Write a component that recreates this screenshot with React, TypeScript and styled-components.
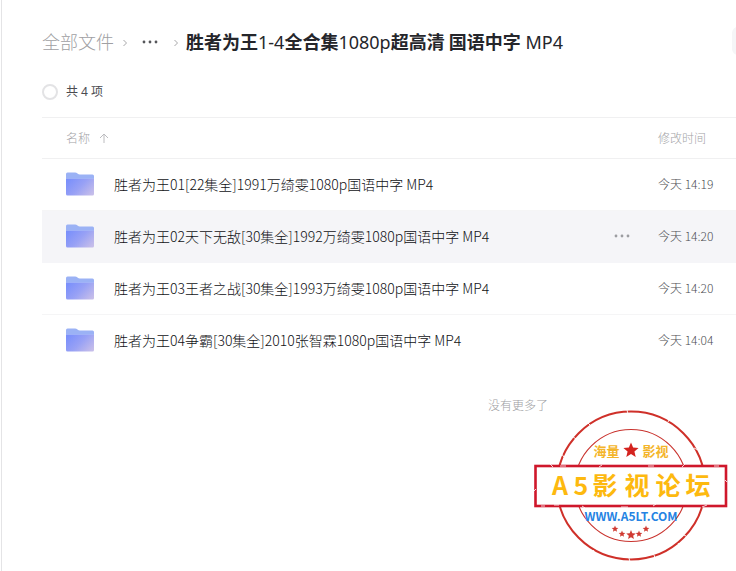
import React from "react";
import styled, { createGlobalStyle } from "styled-components";

const GlobalStyle = createGlobalStyle`
  *, *::before, *::after { box-sizing: border-box; }
  body {
    margin: 0;
    background: #fff;
    color: #25262b;
    font: 14px/20px "Noto Sans CJK SC", sans-serif;
  }
  button { font: inherit; padding: 0; border: 0; background: none; cursor: pointer; }
`;

const Page = styled.main`
  position: relative;
  min-height: 100vh;
  margin-left: 1px;
  padding: 27px 0 0 40px;
  border-left: 1px solid #e4e4e6;
  overflow: hidden;
`;

const TopBar = styled.header`
  display: flex;
  align-items: center;
  justify-content: space-between;
  height: 28px;
`;

const MoreButton = styled.button<{ $tone: string }>`
  display: flex;
  align-items: center;
  justify-content: center;
  width: 30px;
  height: 20px;
  color: ${(p) => p.$tone};
  svg { width: 16px; height: 4px; fill: currentColor; }
`;

const Crumbs = styled.nav`
  display: flex;
  align-items: center;
  font-size: 18px;
  line-height: 28px;
  white-space: nowrap;
  ${MoreButton} { margin-top: 2px; }
`;

const CrumbLink = styled.a`
  color: #a0a0a3;
  font-weight: 300;
  text-decoration: none;
`;

const Separator = styled.svg`
  width: 6px;
  height: 8px;
  margin: 4px 7px 0 8px;
  fill: none;
  stroke: #a8a8aa;
`;

const Title = styled.h1`
  margin: 0;
  font-size: 18px;
  line-height: 28px;
  font-weight: 700;
`;

const Latin = styled.span`
  font-family: "Noto Sans", sans-serif;
  font-weight: 400;
`;

const EdgeButton = styled.button`
  flex: none;
  width: 32px;
  height: 28px;
  margin-right: -28px;
  border-radius: 6px;
  background: #f5f5f7;
`;

const SelectAll = styled.label`
  display: flex;
  align-items: center;
  gap: 8px;
  height: 20px;
  margin: 27px 0 15px;
  color: #4a4b50;
  font-family: "Noto Sans", "Noto Sans CJK SC", sans-serif;
  font-size: 12px;
`;

const RoundCheck = styled.input`
  appearance: none;
  width: 16px;
  height: 16px;
  margin: 0;
  border: 2px solid #e3e3e5;
  border-radius: 50%;
  &:checked { background: #637dff; }
`;

const FileTable = styled.table`
  width: 100%;
  border-collapse: separate;
  border-spacing: 0;
  border-top: 1px solid #f0f0f1;
  table-layout: fixed;
`;

const HeadCell = styled.th<{ $width?: number; $indent?: number }>`
  width: ${(p) => (p.$width ? `${p.$width}px` : "auto")};
  height: 41px;
  padding: 0 0 1px ${(p) => p.$indent ?? 0}px;
  border-bottom: 1px solid #f0f0f1;
  color: #a4a4a7;
  font-size: 12px;
  font-weight: 300;
  text-align: left;
`;

const SortButton = styled.button`
  display: flex;
  align-items: center;
  gap: 9px;
  color: inherit;
  font-weight: 300;
  svg { width: 10px; height: 10px; fill: none; stroke: #bcbcbf; }
`;

const FileRow = styled.tr<{ $active?: boolean }>`
  background: ${(p) => (p.$active ? "#f5f5f8" : "transparent")};
  td {
    height: 52px;
    padding: 0 0 2px;
    border-bottom: 1px solid ${(p) => (p.$active ? "#f5f5f8" : "#f5f5f6")};
  }
  &:last-child td { border-bottom-color: transparent; }
`;

const FileName = styled.div`
  display: flex;
  align-items: center;
  gap: 20px;
  padding-left: 24px;
  font-weight: 300;
  color: #101115;
  white-space: nowrap;
`;

const FolderIcon = styled.svg`
  flex: none;
  width: 28px;
  height: 24px;
`;

const ModifiedTime = styled.time`
  color: #4c4d52;
  font-size: 12px;
  font-weight: 300;
  white-space: nowrap;
`;

const EndNote = styled.p`
  margin: 28px 0 0;
  padding-right: 188px;
  color: #a0a0a3;
  font-size: 12px;
  font-weight: 300;
  text-align: right;
`;

const Stamp = styled.svg`
  position: absolute;
  right: 4px;
  bottom: 5px;
  width: 202px;
  height: 160px;
  pointer-events: none;
`;

const StampText = styled.text<{ $size: number; $fill: string }>`
  font-family: "Noto Sans CJK SC", sans-serif;
  font-size: ${(p) => p.$size}px;
  font-weight: 700;
  fill: ${(p) => p.$fill};
  text-anchor: middle;
`;

const files = [
  { name: "胜者为王01[22集全]1991万绮雯1080p国语中字 MP4", time: "14:19" },
  { name: "胜者为王02天下无敌[30集全]1992万绮雯1080p国语中字 MP4", time: "14:20", active: true },
  { name: "胜者为王03王者之战[30集全]1993万绮雯1080p国语中字 MP4", time: "14:20" },
  { name: "胜者为王04争霸[30集全]2010张智霖1080p国语中字 MP4", time: "14:04" },
];

const Dots = () => (
  <svg viewBox="0 0 16 4" aria-hidden="true">
    <circle cx="2" cy="2" r="1.4" />
    <circle cx="8" cy="2" r="1.4" />
    <circle cx="14" cy="2" r="1.4" />
  </svg>
);

const Chevron = () => (
  <Separator viewBox="0 0 6 8" aria-hidden="true">
    <path d="M1.5 1 4.5 4 1.5 7" />
  </Separator>
);

const Folder = () => (
  <FolderIcon viewBox="0 0 28 24" aria-hidden="true">
    <defs>
      <linearGradient id="folderFront" x1="0" y1="0.2" x2="1" y2="0.8">
        <stop offset="0" stopColor="#7b90fb" />
        <stop offset="0.5" stopColor="#98a1f5" />
        <stop offset="1" stopColor="#c5bdea" />
      </linearGradient>
    </defs>
    <path d="M0 9V2Q0 .5 1.500 .5H9Q10.500 .5 11.500 1.500T14 2.500H26.500Q28 2.500 28 4V9Z" fill="#9bb2f5" />
    <path d="M0 6.500H28V22Q28 23.500 26.500 23.500H1.500Q0 23.500 0 22Z" fill="url(#folderFront)" />
    <path d="M0 6.500H28" stroke="#a9bbf9" strokeWidth=".6" />
  </FolderIcon>
);

const starPoints = (cx: number, cy: number, r: number) =>
  Array.from({ length: 10 }, (_, i) => {
    const radius = i % 2 ? r * 0.45 : r;
    const angle = -Math.PI / 2 + (i * Math.PI) / 5;
    return `${(cx + radius * Math.cos(angle)).toFixed(2)},${(cy + radius * Math.sin(angle)).toFixed(2)}`;
  }).join(" ");

const bannerGlyphs = [
  { glyph: "A", x: 30 },
  { glyph: "5", x: 51 },
  { glyph: "影", x: 75 },
  { glyph: "视", x: 107 },
  { glyph: "论", x: 138 },
  { glyph: "坛", x: 168 },
];

const smallStars = [
  [85, 123, 3.5],
  [92, 128, 3.5],
  [101, 129, 5],
  [109, 128, 3.5],
  [116, 123, 3.5],
];

const ForumStamp = () => (
  <Stamp viewBox="0 0 202 160" role="img" aria-label="A5影视论坛 WWW.A5LT.COM">
    <circle cx="101" cy="79.5" r="74" fill="none" stroke="#cf3029" strokeWidth="2" />
    <circle cx="101" cy="79.5" r="56" fill="none" stroke="#c9332e" strokeWidth="1.1" />
    <path
      d="M30 46 34 51M60 19 57 16M138 16 140 12M164 42 168 44M33 118 29 120M64 144 61 148M124 149 126 155M148 137 150 140M97 4 98 8M156 130 152 128M99 152 100 156M46 33 42 30"
      stroke="#fff"
      strokeWidth=".9"
    />
    <rect x="5.500" y="60" width="190.500" height="40" fill="#fff" stroke="#cf172b" strokeWidth="2.600" />
    <path
      d="M20 58 23 61M30 60H36M72 59 69 61M118 60H124M152 61 155 58M184 60H189M11 100H15M24 99H29M52 100 55 102M91 101H98M123 100 126 98M172 101 177 99M195 74 197 76M4 85 6 83"
      stroke="#fff"
      strokeWidth=".8"
    />
    <StampText $size={13} $fill="#f4b52a" x="76.500" y="50">海量</StampText>
    <StampText $size={13} $fill="#f4b52a" x="125.500" y="50">影视</StampText>
    <polygon points={starPoints(101, 44.5, 8)} fill="#d4231f" />
    {bannerGlyphs.map(({ glyph, x }) => (
      <StampText key={x} $size={25} $fill="#fdb90f" x={x} y="89">{glyph}</StampText>
    ))}
    <StampText $size={12} $fill="#2583e3" x="101" y="115">WWW.A5LT.COM</StampText>
    {smallStars.map(([cx, cy, r]) => (
      <polygon key={cx} points={starPoints(cx, cy, r)} fill="#d03a32" />
    ))}
  </Stamp>
);

export default function App() {
  return (
    <>
      <GlobalStyle />
      <Page>
        <TopBar>
          <Crumbs aria-label="文件路径">
            <CrumbLink href="#all">全部文件</CrumbLink>
            <Chevron />
            <MoreButton $tone="#55565a" aria-label="更多路径"><Dots /></MoreButton>
            <Chevron />
            <Title>
              胜者为王<Latin>1-4</Latin>全合集<Latin>1080p</Latin>超高清 国语中字<Latin> MP4</Latin>
            </Title>
          </Crumbs>
          <EdgeButton aria-label="操作" />
        </TopBar>
        <SelectAll>
          <RoundCheck type="checkbox" />
          共 4 项
        </SelectAll>
        <FileTable>
          <thead>
            <tr>
              <HeadCell $indent={24}>
                <SortButton>
                  名称
                  <svg viewBox="0 0 10 10" aria-hidden="true">
                    <path d="M5 10V1M1 5 5 1 9 5" />
                  </svg>
                </SortButton>
              </HeadCell>
              <HeadCell $width={51} aria-label="操作" />
              <HeadCell $width={78}>修改时间</HeadCell>
            </tr>
          </thead>
          <tbody>
            {files.map((file) => (
              <FileRow key={file.name} $active={file.active}>
                <td>
                  <FileName>
                    <Folder />
                    {file.name}
                  </FileName>
                </td>
                <td>
                  {file.active && (
                    <MoreButton $tone="#9c9da1" aria-label="更多操作"><Dots /></MoreButton>
                  )}
                </td>
                <td><ModifiedTime>今天 {file.time}</ModifiedTime></td>
              </FileRow>
            ))}
          </tbody>
        </FileTable>
        <EndNote>没有更多了</EndNote>
        <ForumStamp />
      </Page>
    </>
  );
}
